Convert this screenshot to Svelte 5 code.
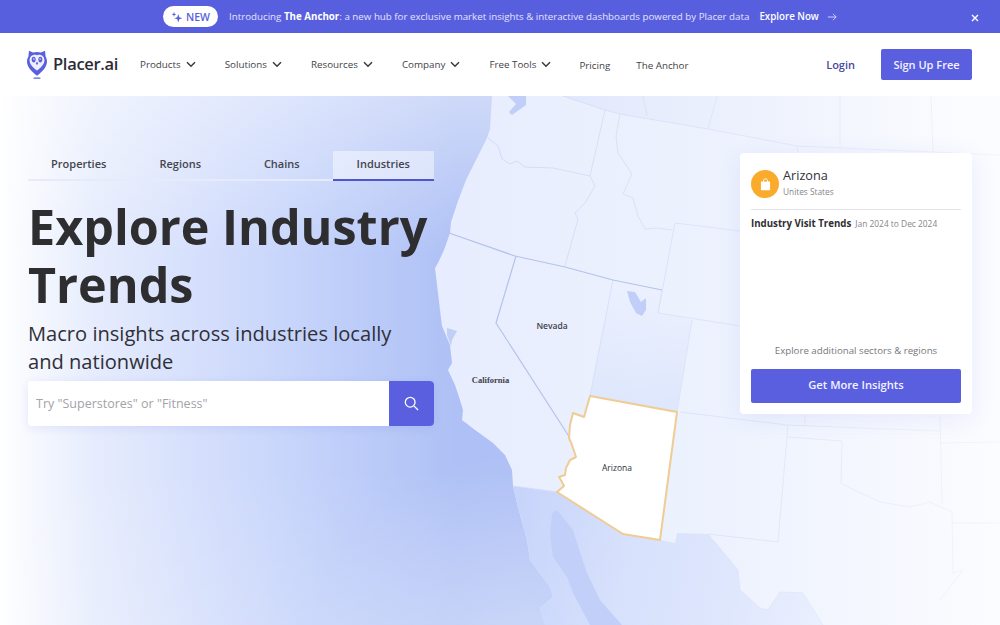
<script>
  const navItems = [
    { label: 'Products', caret: true },
    { label: 'Solutions', caret: true },
    { label: 'Resources', caret: true },
    { label: 'Company', caret: true },
    { label: 'Free Tools', caret: true },
    { label: 'Pricing', caret: false },
    { label: 'The Anchor', caret: false }
  ];
  const tabs = ['Properties', 'Regions', 'Chains', 'Industries'];
  const land = 'M492 96L490 129L487 138L476 160L466 180L458 201L451 222L450 233L444 250L438 263L435 268L438 293L440 310L442 326L450 345L452 363L448 370L455 385L460 400L463 410L462 420L475 430L493 443L505 455L512 470L513 486L518 507L527 540L530 560L550 587L553 597L540 608L545 625L1000 625L1000 96Z';
  const mexico = 'M513 486L557 492L623 534L660 540L675 543L677 533L708 534L738 570L740 590L760 608L768 610L780 592L803 593L823 625L545 625L540 608L553 597L550 587L530 560L527 540L518 507Z';
  const gulf = 'M552 513L557 510L573 530L580 552L587 573L600 600L622 625L590 625L573 593L567 577L553 557L550 535Z';
  const canada = 'M540 96L563 96L605 110L620 114L708 129L797 146L933 152L1000 155L1000 96Z';
  const utah = 'M613 280L662 290L658 313L692 320L677 412L590 396Z';
  const arizona = 'M590 396L677 412L660 540L623 534L557 492L564 486L562 482L559 477L565 475L566 468L570 460L576 457L572 445L569 438L570 425L573 413L584 417Z';
  const borders = [
    'M488 138L498 146L502 159L510 164L517 161L525 167L553 168L590 176',
    'M605 110L590 176L595 186L585 203L575 213L578 219L565 266',
    'M563 96L605 110L620 114L708 129L797 146L933 152L1000 155',
    'M620 114L616 136L618 153L632 174L623 194L633 198L638 216L645 229L657 228L672 230',
    'M675 223L658 313L740 326',
    'M675 223L740 231',
    'M662 290L658 313',
    'M692 320L677 412',
    'M613 280L590 396',
    'M643 96L647 116',
    'M717 96L708 129',
    'M840 96L840 146',
    'M931 96L933 152',
    'M797 146L798 153',
    'M680 412L787 425L940 431',
    'M805 415L805 425',
    'M788 425L778 542L708 534',
    'M788 437L842 441L841 483L850 488L880 502L910 507L930 502L952 512L953 573L963 570L940 600',
    'M940 415L942 503',
    'M940 443L1000 442',
    'M953 523L1000 523',
    'M708 534L738 570L740 590L760 608L768 610L780 592L803 593L823 625',
    'M660 540L662 573L653 593L650 613L653 625',
    'M513 486L557 492'
  ];
  const strong = ['M449 233L515 256L565 267L613 280L662 290', 'M516 256L496 323L570 438'];
</script>

<div class="page">
  <div class="banner">
    <span class="pill">
      <svg class="spark" viewBox="0 0 14 14" aria-hidden="true">
        <path d="M8.500 3.500L9.700 7.300L13.200 8.500L9.700 9.700L8.500 13.500L7.300 9.700L3.800 8.500L7.300 7.300Z" />
        <path d="M3.500 1L4.200 3.300L6.300 4L4.200 4.700L3.500 7L2.800 4.700L.7 4L2.800 3.300Z" />
      </svg>
      NEW
    </span>
    <span class="intro">Introducing <b>The Anchor</b>: a new hub for exclusive market insights &amp; interactive dashboards powered by Placer data</span>
    <span class="explore">Explore Now</span>
    <svg class="arrow" viewBox="0 0 12 12" aria-hidden="true"><path d="M1 6H11M7.200 2.200L11 6L7.200 9.800" /></svg>
    <svg class="close" viewBox="0 0 8 8" aria-hidden="true"><path d="M1 1L7 7M7 1L1 7" /></svg>
  </div>

  <header class="topbar">
    <div class="logo">
      <svg class="owl" viewBox="0 0 20 29" aria-hidden="true">
        <path class="owl-body" d="M2 .8L6 2.600C7.200 2.100 8.600 1.900 10 1.900C11.400 1.900 12.800 2.100 14 2.600L18 .8L18.600 6.500C19.500 8 20 9.600 20 11.300C20 16 17 20 12 24.200L10 25.800L8 24.200C3 20 0 16 0 11.300C0 9.600.5 8 1.400 6.500Z" />
        <path class="owl-face" d="M10 5.200C13.800 3.900 17.400 6.200 17.400 10.200C17.400 14.300 14 17.200 10 20.600C6 17.200 2.600 14.300 2.600 10.200C2.600 6.200 6.200 3.900 10 5.200Z" />
        <ellipse class="owl-eye" cx="6.700" cy="9.600" rx="2" ry="2.800" />
        <ellipse class="owl-eye" cx="13.300" cy="9.600" rx="2" ry="2.800" />
        <circle class="owl-face" cx="6.900" cy="9" r=".8" />
        <circle class="owl-face" cx="13.100" cy="9" r=".8" />
        <path class="owl-eye" d="M10 11.500L11.200 13.400L10 15L8.800 13.400Z" />
        <rect class="owl-body" x="6.500" y="27.600" width="7" height="1.200" rx=".6" />
      </svg>
      <span class="wordmark">Placer.ai</span>
    </div>
    <nav class="nav">
      {#each navItems as item}
        <a class="nav-item" class:plain={!item.caret} href="#top">
          {item.label}
          {#if item.caret}
            <svg class="caret" viewBox="0 0 10 7" aria-hidden="true"><path d="M1 1.200L5 5.200L9 1.200" /></svg>
          {/if}
        </a>
      {/each}
    </nav>
    <div class="actions">
      <a class="login" href="#top">Login</a>
      <a class="signup" href="#top">Sign Up Free</a>
    </div>
  </header>

  <main class="hero">
    <svg class="map" viewBox="0 96 1000 529" preserveAspectRatio="none" aria-hidden="true">
      <defs>
        <linearGradient id="ocean" gradientUnits="userSpaceOnUse" x1="0" y1="0" x2="480" y2="0">
          <stop offset="0" stop-color="#ffffff" />
          <stop offset=".08" stop-color="#f4f7fe" />
          <stop offset=".2" stop-color="#e6ecfd" />
          <stop offset=".42" stop-color="#d5dffc" />
          <stop offset=".62" stop-color="#c6d4fb" />
          <stop offset=".95" stop-color="#aec0f5" />
        </linearGradient>
        <linearGradient id="oceanFade" x1="0" y1="0" x2="0" y2="1">
          <stop offset="0" stop-color="#fff" stop-opacity=".4" />
          <stop offset=".3" stop-color="#fff" stop-opacity="0" />
          <stop offset=".7" stop-color="#fff" stop-opacity="0" />
          <stop offset="1" stop-color="#fff" stop-opacity=".14" />
        </linearGradient>
        <radialGradient id="coastGlow" gradientUnits="userSpaceOnUse" cx="530" cy="680" r="230">
          <stop offset="0" stop-color="#fff" stop-opacity=".3" />
          <stop offset="1" stop-color="#fff" stop-opacity="0" />
        </radialGradient>
        <linearGradient id="landFill" gradientUnits="userSpaceOnUse" x1="440" y1="0" x2="1000" y2="0">
          <stop offset="0" stop-color="#e7edfe" />
          <stop offset=".5" stop-color="#edf2fe" />
          <stop offset="1" stop-color="#fbfcff" />
        </linearGradient>
        <linearGradient id="mexicoFill" gradientUnits="userSpaceOnUse" x1="515" y1="540" x2="830" y2="600">
          <stop offset="0" stop-color="#c8d5fb" />
          <stop offset=".35" stop-color="#d7e1fc" />
          <stop offset=".7" stop-color="#dfe7fd" />
          <stop offset="1" stop-color="#ebf0fe" />
        </linearGradient>
        <linearGradient id="canadaFill" gradientUnits="userSpaceOnUse" x1="540" y1="0" x2="960" y2="0">
          <stop offset="0" stop-color="#e0e7fc" />
          <stop offset="1" stop-color="#fbfcff" />
        </linearGradient>
        <linearGradient id="lineStroke" gradientUnits="userSpaceOnUse" x1="440" y1="0" x2="1000" y2="0">
          <stop offset="0" stop-color="#cfd9f5" />
          <stop offset=".6" stop-color="#e1e7fa" />
          <stop offset="1" stop-color="#f3f5fd" />
        </linearGradient>
        <linearGradient id="utahFill" gradientUnits="userSpaceOnUse" x1="0" y1="285" x2="0" y2="410">
          <stop offset="0" stop-color="#d8e2fc" stop-opacity="0" />
          <stop offset="1" stop-color="#d8e2fc" stop-opacity=".7" />
        </linearGradient>
      </defs>
      <rect x="0" y="96" width="1000" height="529" fill="url(#ocean)" />
      <rect x="0" y="96" width="1000" height="529" fill="url(#oceanFade)" />
      <rect x="0" y="96" width="1000" height="529" fill="url(#coastGlow)" />
      <path d={land} fill="url(#landFill)" />
      <path d={canada} fill="url(#canadaFill)" />
      <path d={utah} fill="url(#utahFill)" />
      <path d={mexico} fill="url(#mexicoFill)" />
      <path d={gulf} fill="#c2d0f9" />
      <path class="water" d="M508 96L526 96L526 105L512 115L509 112L516 104Z" />
      <path class="water" d="M627 291L635 292L641 302L646 298L646 310L642 316L636 313L630 302Z" />
      <path class="water" d="M447 328L457 331L452 340L451 346L447 335Z" />
      {#each borders as d}
        <path class="border" {d} />
      {/each}
      {#each strong as d}
        <path class="border strong" {d} />
      {/each}
      <path class="az" d={arizona} />
      <text class="state" x="552" y="329">Nevada</text>
      <text class="state serif" x="490.500" y="383">California</text>
      <text class="state az-label" x="617" y="471">Arizona</text>
    </svg>

    <section class="intro-col">
      <div class="tabs">
        {#each tabs as tab, i}
          <button class="tab" class:active={i === 3}>{tab}</button>
        {/each}
      </div>
      <h1>Explore Industry Trends</h1>
      <p class="sub">Macro insights across industries locally and nationwide</p>
      <div class="search">
        <input placeholder={'Try "Superstores" or "Fitness"'} />
        <button class="search-btn" aria-label="Search">
          <svg viewBox="0 0 16 16" aria-hidden="true"><circle cx="6.600" cy="6.600" r="5.200" /><path d="M10.500 10.500L15 15" /></svg>
        </button>
      </div>
    </section>

    <aside class="card">
      <div class="place">
        <span class="badge">
          <svg viewBox="0 0 12 14" aria-hidden="true">
            <path class="bag" d="M1 3.600H11V12.400C11 13 10.600 13.400 10 13.400H2C1.400 13.400 1 13 1 12.400Z" />
            <path class="handle" d="M3.800 5.600V2.800C3.800 1.500 4.800.8 6 .8C7.200.8 8.200 1.500 8.200 2.800V5.600" />
          </svg>
        </span>
        <div>
          <div class="state-name">Arizona</div>
          <div class="country">Unites States</div>
        </div>
      </div>
      <div class="trend"><b>Industry Visit Trends</b><span>Jan 2024 to Dec 2024</span></div>
      <div class="more">Explore additional sectors &amp; regions</div>
      <button class="cta">Get More Insights</button>
    </aside>
  </main>
</div>

<style>
  :global(body) {
    margin: 0;
    background: #fff;
  }
  .page {
    width: 1000px;
    height: 625px;
    overflow: hidden;
    font-family: "Open Sans", sans-serif;
    color: #333;
    display: flex;
    flex-direction: column;
  }
  .banner {
    height: 33px;
    flex: none;
    background: #585fdf;
    color: #e3e5fb;
    font-size: 9.750px;
    display: flex;
    align-items: center;
    padding-left: 163px;
    position: relative;
    box-sizing: border-box;
  }
  .pill {
    width: 55px;
    height: 21px;
    border-radius: 11px;
    background: #fff;
    color: #585fdf;
    font-weight: 600;
    font-size: 10.500px;
    display: flex;
    align-items: center;
    justify-content: center;
    gap: 3px;
    margin-right: 11px;
  }
  .spark {
    width: 12px;
    height: 12px;
    fill: #585fdf;
  }
  .intro b {
    color: #fff;
    font-weight: 700;
  }
  .explore {
    color: #fff;
    font-weight: 600;
    margin-left: 10px;
  }
  .arrow {
    width: 10px;
    height: 10px;
    margin-left: 8px;
    fill: none;
    stroke: #e3e5fb;
    stroke-width: 1;
  }
  .close {
    position: absolute;
    right: 21px;
    top: 14px;
    width: 8px;
    height: 8px;
    fill: none;
    stroke: #fff;
    stroke-width: 1.400;
  }
  .topbar {
    height: 63px;
    flex: none;
    box-sizing: border-box;
    display: flex;
    align-items: center;
    padding: 0 28px 0 27px;
    background: #fff;
  }
  .logo {
    display: flex;
    align-items: center;
    gap: 6px;
    width: 113px;
    flex: none;
  }
  .owl {
    width: 20px;
    height: 29px;
    flex: none;
  }
  .owl-body {
    fill: #5a5fdf;
  }
  .owl-face {
    fill: #eef0fd;
  }
  .owl-eye {
    fill: #5a5fdf;
  }
  .wordmark {
    font-size: 16.500px;
    font-weight: 600;
    color: #2c2d35;
    letter-spacing: -.3px;
    margin-top: -3px;
  }
  .nav {
    display: flex;
    align-items: center;
    font-size: 9.800px;
    color: #3f3f48;
  }
  .nav-item {
    color: inherit;
    text-decoration: none;
    display: flex;
    align-items: center;
    gap: 5px;
    margin-right: 29px;
    white-space: nowrap;
    margin-top: -1px;
  }
  .nav-item.plain {
    margin-top: 1px;
    margin-right: 27px;
    margin-left: -1px;
  }
  .caret {
    width: 10px;
    height: 7px;
    fill: none;
    stroke: #3a3a44;
    stroke-width: 1.500;
  }
  .actions {
    margin-left: auto;
    display: flex;
    align-items: center;
    gap: 26px;
  }
  .login {
    color: #46489f;
    font-size: 11px;
    font-weight: 600;
    text-decoration: none;
    margin-top: -1px;
  }
  .signup {
    width: 91px;
    height: 31px;
    background: #5a5fdf;
    color: #f2f3ff;
    border-radius: 2px;
    font-size: 11px;
    font-weight: 600;
    display: flex;
    align-items: center;
    justify-content: center;
    text-decoration: none;
    margin-top: -1px;
  }
  .hero {
    position: relative;
    flex: 1;
    display: flex;
    justify-content: space-between;
    align-items: flex-start;
    padding: 55px 28px 0;
  }
  .map {
    position: absolute;
    inset: 0;
    width: 100%;
    height: 100%;
  }
  .water {
    fill: #c0cef8;
  }
  .border {
    fill: none;
    stroke: url(#lineStroke);
    stroke-width: 1;
    stroke-linejoin: round;
  }
  .border.strong {
    stroke: #b5c3ec;
    stroke-width: 1.200;
  }
  .az {
    fill: #fff;
    stroke: #f0cc95;
    stroke-width: 2;
    stroke-linejoin: round;
  }
  .state {
    font-family: "Open Sans", sans-serif;
    font-size: 8.500px;
    font-weight: 600;
    fill: #3d3f4b;
    text-anchor: middle;
  }
  .state.serif {
    font-family: "Liberation Serif", serif;
    font-weight: 700;
  }
  .state.az-label {
    font-weight: 500;
    fill: #30313a;
  }
  .intro-col {
    position: relative;
    width: 406px;
    flex: none;
  }
  .tabs {
    display: grid;
    grid-template-columns: repeat(4, 1fr);
  }
  .tab {
    height: 30px;
    padding: 0 0 3px;
    border: 0;
    border-bottom: 2px solid #e6ebfb;
    background: none;
    font: 600 11px "Open Sans", sans-serif;
    color: #44454f;
  }
  .tab.active {
    background: rgba(255, 255, 255, .45);
    border-bottom-color: #5055c8;
  }
  h1 {
    margin: 16px 0 0;
    font-size: 48.500px;
    line-height: 58px;
    font-weight: 700;
    color: #2e2e30;
  }
  .sub {
    margin: 7px 0 0;
    max-width: 380px;
    font-size: 20.100px;
    line-height: 27.500px;
    color: #2f3038;
  }
  .search {
    margin-top: 6px;
    display: flex;
    height: 45px;
    border-radius: 4px;
    overflow: hidden;
    background: #fff;
    box-shadow: 0 2px 10px rgba(90, 95, 223, .12);
  }
  input {
    flex: 1;
    min-width: 0;
    border: 0;
    outline: 0;
    padding: 0 8px;
    font: 400 12.500px "Open Sans", sans-serif;
    background: #fff;
  }
  input::placeholder {
    color: #a3a3a8;
    opacity: 1;
  }
  .search-btn {
    width: 45px;
    border: 0;
    padding: 0;
    background: #5a5fdf;
    display: flex;
    align-items: center;
    justify-content: center;
  }
  .search-btn svg {
    width: 15px;
    height: 15px;
    fill: none;
    stroke: #fff;
    stroke-width: 1.400;
  }
  .card {
    position: relative;
    width: 232px;
    height: 261px;
    margin-top: 2px;
    box-sizing: border-box;
    padding: 11px 11px;
    background: #fff;
    border-radius: 4px;
    box-shadow: 0 4px 24px rgba(90, 95, 223, .1);
    display: flex;
    flex-direction: column;
  }
  .place {
    display: flex;
    align-items: flex-start;
    gap: 4px;
    height: 45px;
    border-bottom: 1px solid #e3e3e8;
  }
  .badge {
    width: 28px;
    height: 28px;
    margin-top: 6px;
    border-radius: 50%;
    background: #fbab2c;
    display: flex;
    align-items: center;
    justify-content: center;
    flex: none;
  }
  .badge svg {
    width: 11px;
    height: 13px;
  }
  .bag {
    fill: #fff;
  }
  .handle {
    fill: none;
    stroke: #fff;
    stroke-width: 1;
  }
  .state-name {
    font-size: 12.700px;
    line-height: 22px;
    color: #30313a;
  }
  .country {
    font-size: 8.300px;
    line-height: 12px;
    color: #85858c;
  }
  .trend {
    margin-top: 7px;
    display: flex;
    align-items: center;
    gap: 4px;
    font-size: 8.400px;
    color: #85858c;
    line-height: 14px;
  }
  .trend b {
    font-size: 9.700px;
    font-weight: 700;
    color: #2e2e33;
  }
  .more {
    margin-top: auto;
    text-align: center;
    font-size: 9.700px;
    line-height: 14px;
    color: #77777e;
    margin-bottom: 11px;
  }
  .cta {
    height: 34px;
    border: 0;
    padding: 0 0 3px;
    flex: none;
    background: #5a5fdf;
    color: #f2f3ff;
    border-radius: 2px;
    font: 600 11.200px "Open Sans", sans-serif;
  }
</style>
